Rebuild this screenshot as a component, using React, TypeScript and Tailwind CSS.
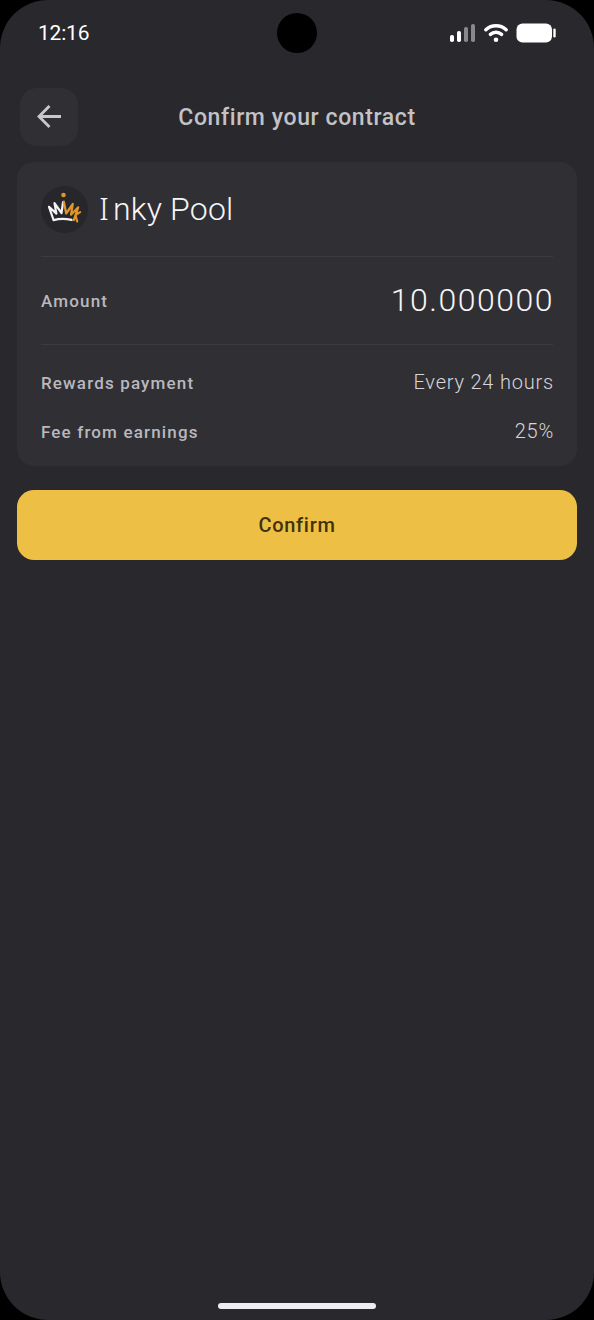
import { type FC } from "react";

interface Detail {
  label: string;
  value: string;
}

const details: Detail[] = [
  { label: "Rewards payment", value: "Every 24 hours" },
  { label: "Fee from earnings", value: "25%" },
];

export default function App() {
  return (
    <div className="h-[1320px] w-[594px] overflow-hidden bg-black font-['Roboto','Noto_Sans',sans-serif]">
      <div className="flex h-full flex-col overflow-hidden rounded-[48px] bg-[#29282d]">
        <StatusBar />
        <Header title="Confirm your contract" />

        <main className="flex flex-1 flex-col px-[17px] pt-[16px]">
          <section className="h-[304px] rounded-[17px] bg-[#302f34] px-6">
            <div className="flex h-[95px] items-center border-b border-[#3c3b40]">
              <PoolLogo />
              <h2 className="ml-[11px] pb-px text-[32px] leading-10 font-[350] text-[#f6f5f8]">
                <span className="font-['Noto_Sans',sans-serif] tracking-[4px]">I</span>
                <span className="tracking-[0.2px]">nky Pool</span>
              </h2>
            </div>

            <div className="flex h-[88px] items-center justify-between border-b border-[#3c3b40]">
              <Label text="Amount" />
              <span className="-mr-px pb-0.5 text-[32px] leading-10 font-[350] tracking-[1.5px] text-[#f6f5f8]">10.000000</span>
            </div>

            <div className="flex flex-col pt-[13px]">
              {details.map((detail) => (
                <div key={detail.label} className="flex h-[49px] items-center justify-between">
                  <Label text={detail.label} />
                  <span className="-mr-px pb-px text-[20px] leading-6 font-light tracking-[0.8px] text-[#d6d5d9]">
                    {detail.value}
                  </span>
                </div>
              ))}
            </div>
          </section>

          <button className="mt-6 h-[70px] w-full rounded-[17px] bg-[#edc045] text-[20px] font-medium tracking-[0.7px] text-[#41320b]">
            Confirm
          </button>
        </main>

        <div className="flex h-[17px] justify-center">
          <div className="h-[6px] w-[158px] rounded-full bg-[#eeedf0]"></div>
        </div>
      </div>
    </div>
  );
}

const Label: FC<{ text: string }> = ({ text }) => (
  <span className="text-[17px] leading-6 font-medium tracking-[1.15px] text-[#b9b8bd]">{text}</span>
);

const Header: FC<{ title: string }> = ({ title }) => (
  <header className="mt-[22px] grid h-[58px] grid-cols-[58px_1fr_58px] items-center px-5">
    <button aria-label="Back" className="flex size-[58px] items-center justify-center rounded-[17px] bg-[#302f34]">
      <svg width="24" height="24" viewBox="0 0 24 24" fill="none" stroke="#c8c7cc" strokeWidth="2.8">
        <path d="M24 11.5H2.5M12.5 .9L2 11.5l10.5 10.6" />
      </svg>
    </button>
    <h1 className="pt-0.5 text-center text-[23px] leading-8 font-medium tracking-[0.6px] text-[#c3c2c7]">{title}</h1>
  </header>
);

const StatusBar = () => (
  <div className="grid h-[66px] grid-cols-[1fr_40px_1fr] items-center px-[38px]">
    <span className="text-[21px] leading-6 tracking-[-0.2px] text-white">12:16</span>
    <div className="size-10 rounded-full bg-black"></div>
    <div className="flex items-center justify-end gap-2">
      <svg width="26" height="18" viewBox="0 0 26 18" fill="#fff">
        <rect x="0" y="11" width="4" height="7" rx="1.8" />
        <rect x="7" y="7" width="4" height="11" rx="1.8" />
        <rect x="14" y="3" width="4" height="15" rx="1.8" fill="#89888b" />
        <rect x="21" y="0" width="4" height="18" rx="1.8" fill="#89888b" />
      </svg>
      <svg width="24" height="18" viewBox="0 0 24 18" fill="none" stroke="#fff" strokeWidth="3.5" strokeLinecap="round">
        <path d="M1.9 5.7C7.5.5 16.5.5 22.1 5.7" />
        <path d="M6.4 10.4c3.2-2.8 8-2.8 11.2 0" />
        <circle cx="12" cy="15.7" r="2.3" fill="#fff" stroke="none" />
      </svg>
      <svg width="40" height="20" viewBox="0 0 40 20" fill="#fff">
        <rect x="0.5" y="0.5" width="35.5" height="19" rx="6" />
        <rect x="37.3" y="5.5" width="2.4" height="9" rx="1.2" />
      </svg>
    </div>
  </div>
);

const PoolLogo = () => (
  <div className="flex size-[47px] items-center justify-center rounded-full bg-[#27262a]">
    <svg width="47" height="47" viewBox="0 0 47 47" fill="none" strokeWidth="2.2" strokeLinecap="round" strokeLinejoin="round">
      <path d="M12.4 33.5L8 20.8l7.4 6.8-1.9-10.4 7 9.8 1.6-11" stroke="#f3f2f4" />
      <path d="M12.6 34.1c5.5-1.6 12-1.6 18-.2" stroke="#f3f2f4" />
      <path d="M22.8 15.5l2.4 12 6.6-9.5-1.8 10.7 7.2-7.4-4.4 12.9M34.5 29l4.6-2.9M34.6 29.5l1.6 6" stroke="#df952b" />
      <circle cx="22.5" cy="9" r="2.3" fill="#df952b" />
    </svg>
  </div>
);
